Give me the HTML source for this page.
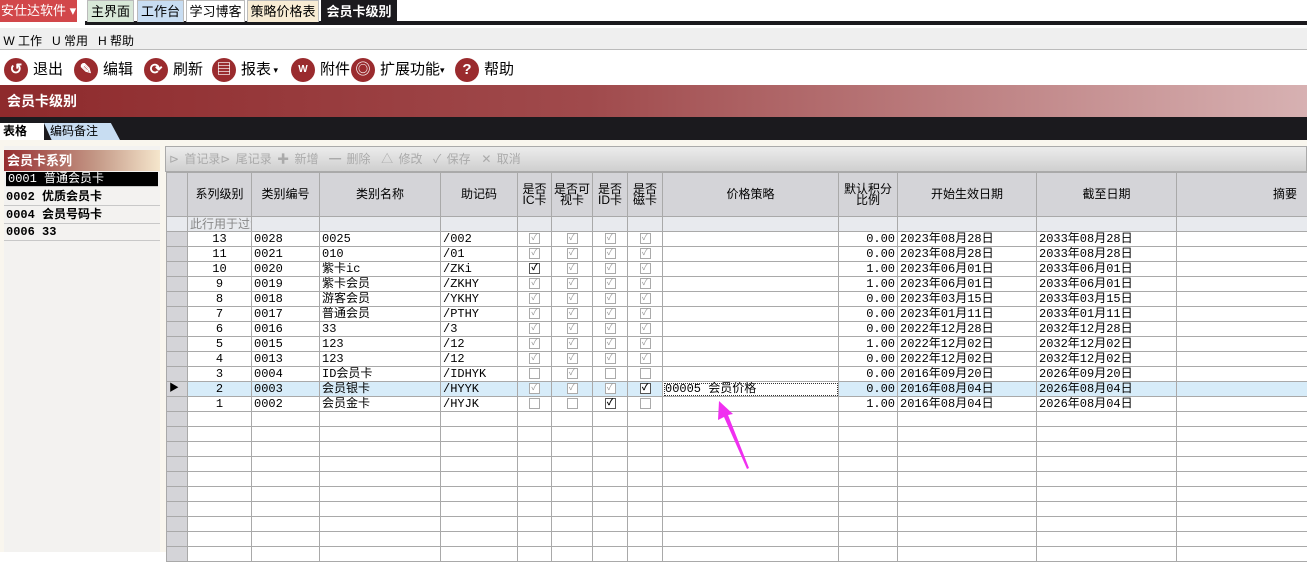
<!DOCTYPE html>
<html><head><meta charset="utf-8"><style>
*{margin:0;padding:0;box-sizing:border-box}
body{width:1307px;height:552px;overflow:hidden;background:#fff;font-family:"Liberation Sans","Noto Sans CJK SC",sans-serif;font-size:12px;position:relative;color:#000}
.a{position:absolute}
.tab{position:absolute;top:0;height:22px;font-size:13px;line-height:21px;padding:0;text-align:center;white-space:nowrap;overflow:hidden;border:1px solid #bbb;border-bottom:none}
.tb{position:absolute;top:57px;font-size:15px;line-height:26px;height:26px;display:flex;align-items:center}
.ic{width:24px;height:24px;border-radius:50%;background:#9a2b2e;display:inline-block;margin-right:5px;position:relative;color:#fff;font-weight:bold;font-size:15px;line-height:24px;text-align:center}
table{border-collapse:collapse;table-layout:fixed;position:absolute;left:166px;top:172px;width:1141px}
td{border:1px solid #a9a9a9;height:15px;padding:0 2px;font-size:12px;line-height:13px;white-space:nowrap;overflow:hidden;font-family:"Liberation Mono","Noto Sans CJK SC",monospace;background:#fff}
tr.h td{height:44px;background:#d4d4d8;text-align:center;font-family:"Liberation Sans","Noto Sans CJK SC",sans-serif;font-size:12px;line-height:11px}
tr.f td{background:#e8eaee}
td.rh{background:#d4d4d8}
td.r{text-align:right}
td.c{text-align:center}
.cb{display:inline-block;width:11px;height:11px;border:1px solid #aaa;background:#fff;vertical-align:middle;font-size:9px;line-height:9px;text-align:center;color:#999}
.cb.k{border-color:#555;color:#000;font-weight:bold}
tr.sel td{background:#d7ecf9}
.li{position:absolute;left:4px;width:156px;height:17px;border-bottom:1px solid #c8c8c8;font-weight:bold;font-size:12px;line-height:16px;padding-left:2px;font-family:"Liberation Mono","Noto Sans CJK SC",monospace}
</style></head><body>
<div class="a" style="left:0;top:0;width:77px;height:22px;background:#d2474a;color:#fff;font-size:13px;line-height:22px;padding-left:1px">安仕达软件 ▾</div>
<div class="a" style="left:85px;top:21px;width:1222px;height:4px;background:#1b1a1e"></div>
<div class="tab" style="left:87px;width:47px;background:#d8e8d8">主界面</div>
<div class="tab" style="left:137px;width:47px;background:#c8ddf2">工作台</div>
<div class="tab" style="left:186px;width:59px;background:#fff">学习博客</div>
<div class="tab" style="left:247px;width:72px;background:#f8ecd4">策略价格表</div>
<div class="tab" style="left:321px;width:76px;background:#1b1a1e;color:#fff;font-weight:bold;border-color:#1b1a1e;height:24px">会员卡级别</div>
<div class="a" style="left:0;top:28px;width:1307px;height:22px;background:#efefef;border-bottom:1px solid #bbb;font-size:12px;line-height:26px">&nbsp;W 工作&nbsp;&nbsp; U 常用&nbsp;&nbsp; H 帮助</div>
<div class="tb" style="left:4px"><span class="ic">↺</span>退出</div>
<div class="tb" style="left:74px"><span class="ic">✎</span>编辑</div>
<div class="tb" style="left:144px"><span class="ic">⟳</span>刷新</div>
<div class="tb" style="left:212px"><span class="ic">▤</span>报表 <small style="font-size:9px">&nbsp;▾</small></div>
<div class="tb" style="left:291px"><span class="ic" style="font-size:10px">W</span>附件</div>
<div class="tb" style="left:351px"><span class="ic">◎</span>扩展功能<small style="font-size:9px">▾</small></div>
<div class="tb" style="left:455px"><span class="ic">?</span>帮助</div>
<div class="a" style="left:0;top:85px;width:1307px;height:32px;background:linear-gradient(90deg,#8e2a2c,#a04a4c 45%,#d7b1b2);color:#fff;font-weight:bold;font-size:14px;line-height:32px;padding-left:7px">会员卡级别</div>
<div class="a" style="left:0;top:117px;width:1307px;height:23px;background:#1b1a1e"></div>
<div class="a" style="left:0;top:123px;width:44px;height:17px;background:#fff;font-weight:bold;font-size:12px;line-height:17px;padding-left:3px">表格</div>
<div class="a" style="left:44px;top:123px;width:76px;height:17px;background:#c8ddf2;clip-path:polygon(0 0,88% 0,100% 100%,10% 100%);font-size:12px;line-height:17px;padding-left:6px">编码备注</div>
<div class="a" style="left:0;top:140px;width:1307px;height:412px;background:#f9f6ee"></div>
<div class="a" style="left:4px;top:146px;width:156px;height:406px;background:#f3f2f0"></div>
<div class="a" style="left:4px;top:150px;width:156px;height:21px;background:linear-gradient(90deg,#962d2f,#c59a88 60%,#f5e6cc);color:#fff;font-weight:bold;font-size:13px;line-height:21px;padding-left:3px">会员卡系列</div>
<div class="li" style="top:172px;background:#000;color:#fff;font-weight:normal;left:6px;width:152px;height:15px;line-height:15px">0001 普通会员卡</div>
<div class="li" style="top:189px">0002 优质会员卡</div>
<div class="li" style="top:207px">0004 会员号码卡</div>
<div class="li" style="top:224px">0006 33</div>
<div class="a" style="left:165px;top:146px;width:1142px;height:26px;background:linear-gradient(#ececec,#cfcfcf);border:1px solid #aaa;color:#aaa;font-size:12px;line-height:25px;padding-left:3px;word-spacing:2px">⊳ 首记录⊳ 尾记录 ✚ 新增 &nbsp;━ 删除 &nbsp;△ 修改 &nbsp;✓ 保存 &nbsp;✕ 取消</div>
<table>
<colgroup><col style="width:21px"><col style="width:64px"><col style="width:68px"><col style="width:121px"><col style="width:77px"><col style="width:34px"><col style="width:41px"><col style="width:35px"><col style="width:35px"><col style="width:176px"><col style="width:59px"><col style="width:139px"><col style="width:140px"><col style="width:131px"></colgroup>
<tr class="h"><td></td><td>系列级别</td><td>类别编号</td><td>类别名称</td><td>助记码</td><td>是否<br>IC卡</td><td>是否可<br>视卡</td><td>是否<br>ID卡</td><td>是否<br>磁卡</td><td>价格策略</td><td>默认积分<br>比例</td><td>开始生效日期</td><td>截至日期</td><td style="text-align:right;padding-right:10px">摘要</td></tr>
<tr class="f"><td class="rh"></td><td style="color:#888;font-family:'Liberation Sans','Noto Sans CJK SC',sans-serif">此行用于过滤</td><td></td><td></td><td></td><td></td><td></td><td></td><td></td><td></td><td></td><td></td><td></td><td></td></tr>
<tr><td class="rh"></td><td class="c">13</td><td>0028</td><td>0025</td><td>/002</td><td class="c"><span class="cb">✓</span></td><td class="c"><span class="cb">✓</span></td><td class="c"><span class="cb">✓</span></td><td class="c"><span class="cb">✓</span></td><td></td><td class="r">0.00</td><td>2023年08月28日</td><td>2033年08月28日</td><td></td></tr>
<tr><td class="rh"></td><td class="c">11</td><td>0021</td><td>010</td><td>/01</td><td class="c"><span class="cb">✓</span></td><td class="c"><span class="cb">✓</span></td><td class="c"><span class="cb">✓</span></td><td class="c"><span class="cb">✓</span></td><td></td><td class="r">0.00</td><td>2023年08月28日</td><td>2033年08月28日</td><td></td></tr>
<tr><td class="rh"></td><td class="c">10</td><td>0020</td><td>紫卡ic</td><td>/ZKi</td><td class="c"><span class="cb k">✓</span></td><td class="c"><span class="cb">✓</span></td><td class="c"><span class="cb">✓</span></td><td class="c"><span class="cb">✓</span></td><td></td><td class="r">1.00</td><td>2023年06月01日</td><td>2033年06月01日</td><td></td></tr>
<tr><td class="rh"></td><td class="c">9</td><td>0019</td><td>紫卡会员</td><td>/ZKHY</td><td class="c"><span class="cb">✓</span></td><td class="c"><span class="cb">✓</span></td><td class="c"><span class="cb">✓</span></td><td class="c"><span class="cb">✓</span></td><td></td><td class="r">1.00</td><td>2023年06月01日</td><td>2033年06月01日</td><td></td></tr>
<tr><td class="rh"></td><td class="c">8</td><td>0018</td><td>游客会员</td><td>/YKHY</td><td class="c"><span class="cb">✓</span></td><td class="c"><span class="cb">✓</span></td><td class="c"><span class="cb">✓</span></td><td class="c"><span class="cb">✓</span></td><td></td><td class="r">0.00</td><td>2023年03月15日</td><td>2033年03月15日</td><td></td></tr>
<tr><td class="rh"></td><td class="c">7</td><td>0017</td><td>普通会员</td><td>/PTHY</td><td class="c"><span class="cb">✓</span></td><td class="c"><span class="cb">✓</span></td><td class="c"><span class="cb">✓</span></td><td class="c"><span class="cb">✓</span></td><td></td><td class="r">0.00</td><td>2023年01月11日</td><td>2033年01月11日</td><td></td></tr>
<tr><td class="rh"></td><td class="c">6</td><td>0016</td><td>33</td><td>/3</td><td class="c"><span class="cb">✓</span></td><td class="c"><span class="cb">✓</span></td><td class="c"><span class="cb">✓</span></td><td class="c"><span class="cb">✓</span></td><td></td><td class="r">0.00</td><td>2022年12月28日</td><td>2032年12月28日</td><td></td></tr>
<tr><td class="rh"></td><td class="c">5</td><td>0015</td><td>123</td><td>/12</td><td class="c"><span class="cb">✓</span></td><td class="c"><span class="cb">✓</span></td><td class="c"><span class="cb">✓</span></td><td class="c"><span class="cb">✓</span></td><td></td><td class="r">1.00</td><td>2022年12月02日</td><td>2032年12月02日</td><td></td></tr>
<tr><td class="rh"></td><td class="c">4</td><td>0013</td><td>123</td><td>/12</td><td class="c"><span class="cb">✓</span></td><td class="c"><span class="cb">✓</span></td><td class="c"><span class="cb">✓</span></td><td class="c"><span class="cb">✓</span></td><td></td><td class="r">0.00</td><td>2022年12月02日</td><td>2032年12月02日</td><td></td></tr>
<tr><td class="rh"></td><td class="c">3</td><td>0004</td><td>ID会员卡</td><td>/IDHYK</td><td class="c"><span class="cb"></span></td><td class="c"><span class="cb">✓</span></td><td class="c"><span class="cb"></span></td><td class="c"><span class="cb"></span></td><td></td><td class="r">0.00</td><td>2016年09月20日</td><td>2026年09月20日</td><td></td></tr>
<tr class="sel"><td class="rh" style="background:#d4d4d8;font-size:10px">▶</td><td class="c">2</td><td>0003</td><td>会员银卡</td><td>/HYYK</td><td class="c"><span class="cb">✓</span></td><td class="c"><span class="cb">✓</span></td><td class="c"><span class="cb">✓</span></td><td class="c"><span class="cb k">✓</span></td><td style="background:#fff;outline:1px dotted #333;outline-offset:-2px">00005 会员价格</td><td class="r">0.00</td><td>2016年08月04日</td><td>2026年08月04日</td><td></td></tr>
<tr><td class="rh"></td><td class="c">1</td><td>0002</td><td>会员金卡</td><td>/HYJK</td><td class="c"><span class="cb"></span></td><td class="c"><span class="cb"></span></td><td class="c"><span class="cb k">✓</span></td><td class="c"><span class="cb"></span></td><td></td><td class="r">1.00</td><td>2016年08月04日</td><td>2026年08月04日</td><td></td></tr>
<tr><td class="rh"></td><td></td><td></td><td></td><td></td><td></td><td></td><td></td><td></td><td></td><td></td><td></td><td></td><td></td></tr>
<tr><td class="rh"></td><td></td><td></td><td></td><td></td><td></td><td></td><td></td><td></td><td></td><td></td><td></td><td></td><td></td></tr>
<tr><td class="rh"></td><td></td><td></td><td></td><td></td><td></td><td></td><td></td><td></td><td></td><td></td><td></td><td></td><td></td></tr>
<tr><td class="rh"></td><td></td><td></td><td></td><td></td><td></td><td></td><td></td><td></td><td></td><td></td><td></td><td></td><td></td></tr>
<tr><td class="rh"></td><td></td><td></td><td></td><td></td><td></td><td></td><td></td><td></td><td></td><td></td><td></td><td></td><td></td></tr>
<tr><td class="rh"></td><td></td><td></td><td></td><td></td><td></td><td></td><td></td><td></td><td></td><td></td><td></td><td></td><td></td></tr>
<tr><td class="rh"></td><td></td><td></td><td></td><td></td><td></td><td></td><td></td><td></td><td></td><td></td><td></td><td></td><td></td></tr>
<tr><td class="rh"></td><td></td><td></td><td></td><td></td><td></td><td></td><td></td><td></td><td></td><td></td><td></td><td></td><td></td></tr>
<tr><td class="rh"></td><td></td><td></td><td></td><td></td><td></td><td></td><td></td><td></td><td></td><td></td><td></td><td></td><td></td></tr>
<tr><td class="rh"></td><td></td><td></td><td></td><td></td><td></td><td></td><td></td><td></td><td></td><td></td><td></td><td></td><td></td></tr>
</table>
<svg class="a" style="left:0;top:0" width="1307" height="552"><path d="M749 468 L728 415 L733 414 L719 401 L718 420 L724 417 L747 469 Z" fill="#f030f0"/></svg>
</body></html>
